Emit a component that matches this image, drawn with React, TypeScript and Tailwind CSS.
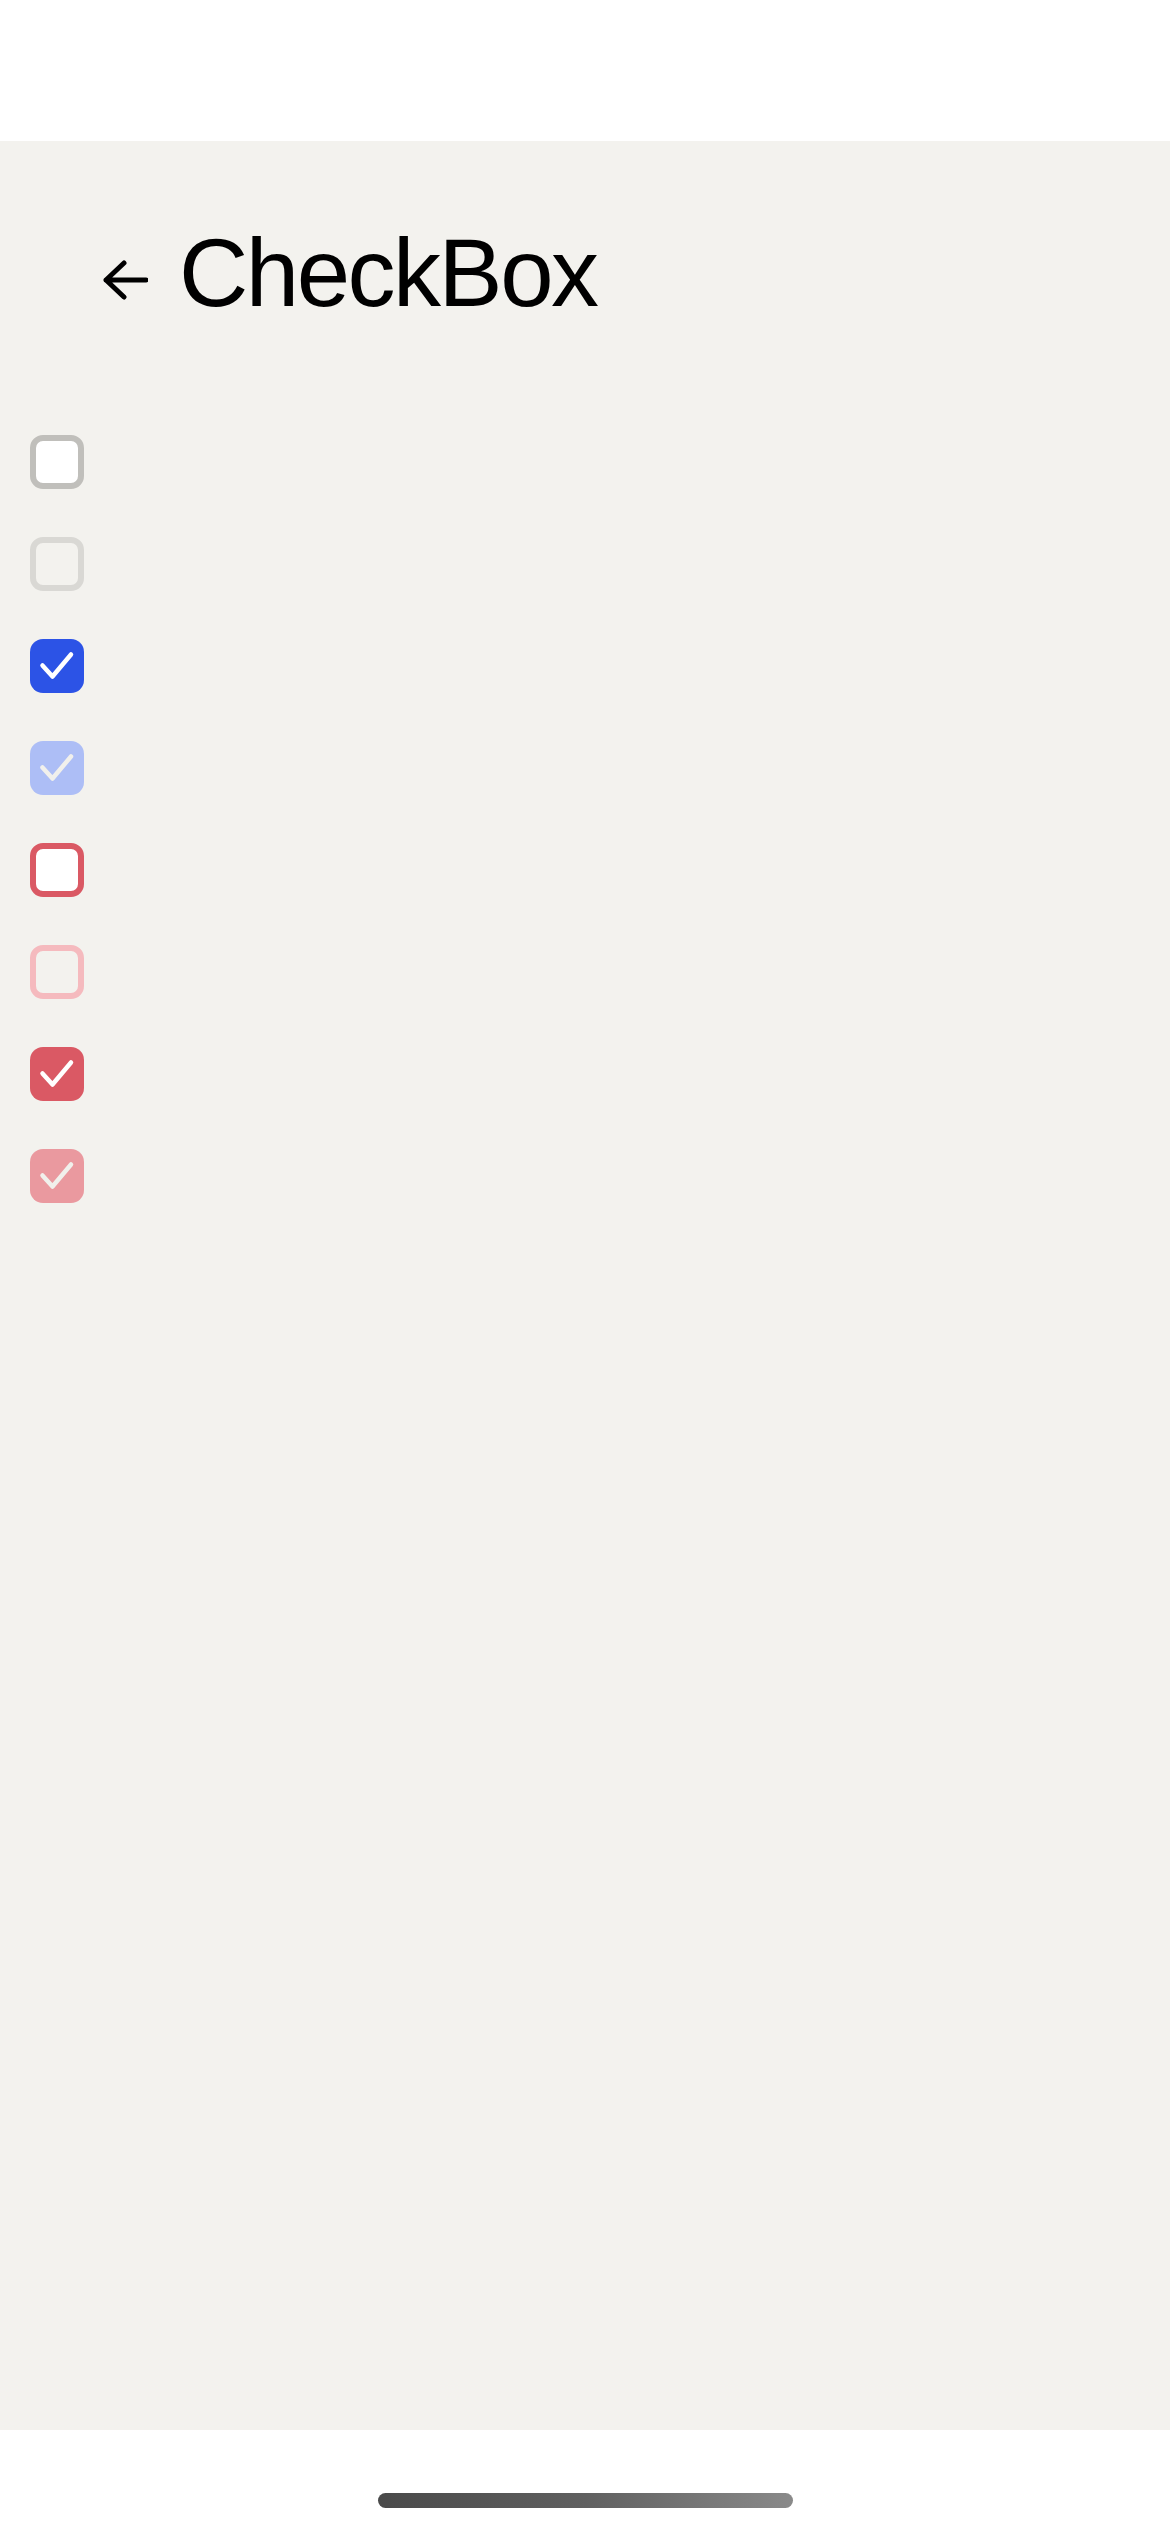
import React from 'react';

type Variant = {
  checked: boolean;
  box: string;
  check?: string;
};

const boxes: Variant[] = [
  { checked: false, box: 'border-[6px] border-[#c0bfbb] bg-white' },
  { checked: false, box: 'border-[6px] border-[#d9d8d4] bg-transparent' },
  { checked: true, box: 'bg-[#2c53e6]', check: '#ffffff' },
  { checked: true, box: 'bg-[#adbef6]', check: '#f1f0ec' },
  { checked: false, box: 'border-[6px] border-[#da5964] bg-white' },
  { checked: false, box: 'border-[6px] border-[#f5babe] bg-transparent' },
  { checked: true, box: 'bg-[#da5964]', check: '#ffffff' },
  { checked: true, box: 'bg-[#ea999f]', check: '#f1f0ec' },
];

const CheckBox = ({ v }: { v: Variant }) => (
  <div className={`w-[54px] h-[54px] rounded-[13px] box-border ${v.box}`}>
    {v.checked && (
      <svg width="54" height="54" viewBox="0 0 54 54" fill="none">
        <path
          d="M12.5 26.5 L22.5 37.5 L41 15.5"
          stroke={v.check}
          strokeWidth={4.5}
          strokeLinecap="round"
          strokeLinejoin="round"
        />
      </svg>
    )}
  </div>
);

export default function App() {
  return (
    <div className="w-[1170px] h-[2532px] bg-white flex flex-col" style={{ fontFamily: '"Liberation Sans", Arial, sans-serif' }}>
      <div className="h-[141px] shrink-0 bg-white" />

      <main className="h-[2289px] shrink-0 bg-[#f3f2ee] flex flex-col">
        {/* Header */}
        <div className="flex items-start pl-[103px] pt-[84px]">
          <svg width="45" height="40" viewBox="0 0 45 40" fill="none" className="mt-[35px] shrink-0">
            <path
              d="M43 20 H3 M21 3 L3 20 L21 37"
              stroke="#000"
              strokeWidth={5}
              strokeLinecap="round"
              strokeLinejoin="round"
            />
          </svg>
          <h1 className="ml-[31px] text-[96px] leading-[96px] tracking-[-2.5px] text-black font-normal">CheckBox</h1>
        </div>

        {/* Checkboxes */}
        <div className="flex flex-col gap-12 pl-[30px] mt-[114px]">
          {boxes.map((v, i) => (
            <CheckBox key={i} v={v} />
          ))}
        </div>
      </main>

      <div className="flex-1 bg-white flex justify-center">
        <div className="mt-[63px] w-[415px] h-[15px] rounded-full bg-gradient-to-r from-[#4a4a4a] via-[#606060] to-[#8a8a8a]" />
      </div>
    </div>
  );
}
